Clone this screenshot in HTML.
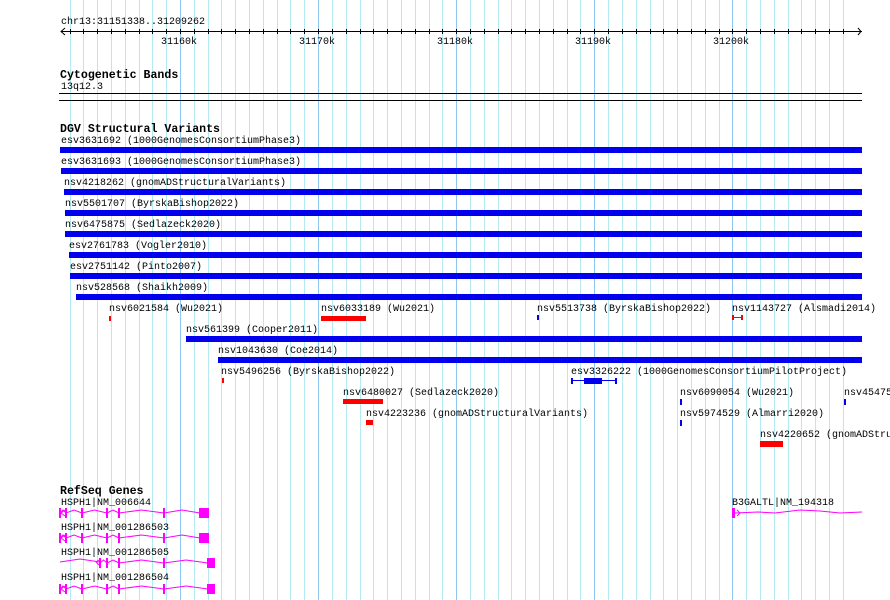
<!DOCTYPE html>
<html><head><meta charset="utf-8"><style>
html,body{margin:0;padding:0;background:#fff;width:890px;height:600px;overflow:hidden;position:relative}
.t{position:absolute;font-family:"Liberation Mono",monospace;font-size:10px;line-height:10px;color:#000;white-space:pre;letter-spacing:0;margin-top:2px}
.h{position:absolute;font-family:"Liberation Mono",monospace;font-size:11.6px;font-weight:bold;line-height:12px;color:#000;white-space:pre;margin-top:2px}
.b{position:absolute;background:#0000ee;height:6px}
.r{position:absolute;background:#f00;height:5px}
.k{position:absolute;background:#000;height:1px}
svg{position:absolute;left:0;top:0}
</style></head><body>
<svg id="g" width="890" height="600"></svg>
<div class="t" style="left:61px;top:16px">chr13:31151338..31209262</div>
<div class="t" style="left:161px;top:36px">31160k</div>
<div class="t" style="left:299px;top:36px">31170k</div>
<div class="t" style="left:437px;top:36px">31180k</div>
<div class="t" style="left:575px;top:36px">31190k</div>
<div class="t" style="left:713px;top:36px">31200k</div>
<div class="h" style="left:60px;top:68px">Cytogenetic Bands</div>
<div class="t" style="left:61px;top:81px">13q12.3</div>
<div class="k" style="left:59px;top:93px;width:803px"></div>
<div class="k" style="left:59px;top:100px;width:803px"></div>
<div class="h" style="left:60px;top:122px">DGV Structural Variants</div>

<div class="t" style="left:61px;top:135px">esv3631692 (1000GenomesConsortiumPhase3)</div><div class="b" style="left:60px;top:147px;width:802px"></div>
<div class="t" style="left:61px;top:156px">esv3631693 (1000GenomesConsortiumPhase3)</div><div class="b" style="left:61px;top:168px;width:801px"></div>
<div class="t" style="left:64px;top:177px">nsv4218262 (gnomADStructuralVariants)</div><div class="b" style="left:64px;top:189px;width:798px"></div>
<div class="t" style="left:65px;top:198px">nsv5501707 (ByrskaBishop2022)</div><div class="b" style="left:65px;top:210px;width:797px"></div>
<div class="t" style="left:65px;top:219px">nsv6475875 (Sedlazeck2020)</div><div class="b" style="left:65px;top:231px;width:797px"></div>
<div class="t" style="left:69px;top:240px">esv2761783 (Vogler2010)</div><div class="b" style="left:69px;top:252px;width:793px"></div>
<div class="t" style="left:70px;top:261px">esv2751142 (Pinto2007)</div><div class="b" style="left:70px;top:273px;width:792px"></div>
<div class="t" style="left:76px;top:282px">nsv528568 (Shaikh2009)</div><div class="b" style="left:76px;top:294px;width:786px"></div>

<div class="t" style="left:109px;top:303px">nsv6021584 (Wu2021)</div><div class="r" style="left:109px;top:316px;width:2px"></div>
<div class="t" style="left:321px;top:303px">nsv6033189 (Wu2021)</div><div class="r" style="left:321px;top:316px;width:45px"></div>
<div class="t" style="left:537px;top:303px">nsv5513738 (ByrskaBishop2022)</div><div class="b" style="left:537px;top:315px;width:2px;height:5px"></div>
<div class="t" style="left:732px;top:303px">nsv1143727 (Alsmadi2014)</div>
<div class="r" style="left:732px;top:315px;width:2px;height:5px"></div><div class="r" style="left:741px;top:315px;width:2px;height:5px"></div><div class="r" style="left:732px;top:317px;width:10px;height:1px"></div>

<div class="t" style="left:186px;top:324px">nsv561399 (Cooper2011)</div><div class="b" style="left:186px;top:336px;width:676px"></div>
<div class="t" style="left:218px;top:345px">nsv1043630 (Coe2014)</div><div class="b" style="left:218px;top:357px;width:644px"></div>

<div class="t" style="left:221px;top:366px">nsv5496256 (ByrskaBishop2022)</div><div class="r" style="left:222px;top:378px;width:2px"></div>
<div class="t" style="left:571px;top:366px">esv3326222 (1000GenomesConsortiumPilotProject)</div>
<div class="b" style="left:571px;top:378px;width:2px;height:6px"></div><div class="b" style="left:615px;top:378px;width:2px;height:6px"></div>
<div class="b" style="left:571px;top:380px;width:45px;height:1px"></div><div class="b" style="left:584px;top:378px;width:18px;height:6px"></div>

<div class="t" style="left:343px;top:387px">nsv6480027 (Sedlazeck2020)</div><div class="r" style="left:343px;top:399px;width:40px"></div>
<div class="t" style="left:680px;top:387px">nsv6090054 (Wu2021)</div><div class="b" style="left:680px;top:399px;width:2px;height:6px"></div>
<div class="t" style="left:844px;top:387px">nsv45475</div><div class="b" style="left:844px;top:399px;width:2px;height:6px"></div>

<div class="t" style="left:366px;top:408px">nsv4223236 (gnomADStructuralVariants)</div><div class="r" style="left:366px;top:420px;width:7px"></div>
<div class="t" style="left:680px;top:408px">nsv5974529 (Almarri2020)</div><div class="b" style="left:680px;top:420px;width:2px;height:6px"></div>

<div class="t" style="left:760px;top:429px">nsv4220652 (gnomADStru</div><div class="r" style="left:760px;top:441px;width:23px;height:6px"></div>

<div class="h" style="left:60px;top:484px">RefSeq Genes</div>
<div class="t" style="left:61px;top:497px">HSPH1|NM_006644</div>
<div class="t" style="left:61px;top:522px">HSPH1|NM_001286503</div>
<div class="t" style="left:61px;top:547px">HSPH1|NM_001286505</div>
<div class="t" style="left:61px;top:572px">HSPH1|NM_001286504</div>
<div class="t" style="left:732px;top:497px">B3GALTL|NM_194318</div>

<script>
var s='';
for(var i=0;i<58;i++){var x=Math.round(180+(i-9)*13.81);if(x<58||x>858)continue;var maj=((i-9)%10===0);
s+='<line x1="'+(x+.5)+'" y1="0" x2="'+(x+.5)+'" y2="600" stroke="'+(maj?'#8ec8f2':'#b4eaf2')+'" stroke-width="1"/>';}
s+='<line x1="61" y1="31.5" x2="862" y2="31.5" stroke="#000"/>';
s+='<polyline points="65,28 61,31.5 65,35" fill="none" stroke="#000"/><polyline points="858,28 861,31.5 858,35" fill="none" stroke="#000"/>';
for(var i=0;i<58;i++){var x=Math.round(180+(i-9)*13.81);if(x<60||x>858)continue;s+='<line x1="'+(x+.5)+'" y1="29" x2="'+(x+.5)+'" y2="34" stroke="#000"/>';}
var M='#f0f';
function gene(y,ex,x0,x1,arrow,box){
 var p='';var pts=[];var n=ex.length;
 for(var i=0;i<n-1;i++){var a=ex[i],b=ex[i+1],m=(a+b)/2;pts.push(a+','+y+' '+m+','+(y-3)+' '+b+','+y);}
 pts.forEach(function(q){p+='<polyline points="'+q+'" fill="none" stroke="'+M+'"/>';});
 ex.forEach(function(x){p+='<rect x="'+(x-1)+'" y="'+(y-5)+'" width="2" height="10" fill="'+M+'"/>';});
 if(arrow)p+='<polyline points="'+(x0+5)+','+(y-3)+' '+(x0+1)+','+y+' '+(x0+5)+','+(y+3)+'" fill="none" stroke="'+M+'"/>';
 p+='<rect x="'+box[0]+'" y="'+(y-5)+'" width="'+box[1]+'" height="10" fill="'+M+'"/>';
 return p;}
s+=gene(513,[60,66,82,107,119,164,200],60,208,1,[200,9]);
s+=gene(538,[60,66,82,107,119,164,200],60,208,1,[200,9]);
s+='<polyline points="60,562 80,559 100,562" fill="none" stroke="'+M+'"/>';
s+=gene(563,[100,107,119,164,208],60,214,0,[207,8]);
s+='<polyline points="99,560 96,562 99,565" fill="none" stroke="'+M+'"/>';
s+=gene(589,[60,66,82,107,119,164,208],60,214,1,[207,8]);
s+='<rect x="732" y="508" width="3" height="10" fill="'+M+'"/><polyline points="735,513 758,512 775,513 800,510 820,511 840,513 862,512" fill="none" stroke="'+M+'"/><polyline points="737,510 740,513 737,516" fill="none" stroke="'+M+'"/>';
document.getElementById('g').innerHTML=s;
</script>
</body></html>
